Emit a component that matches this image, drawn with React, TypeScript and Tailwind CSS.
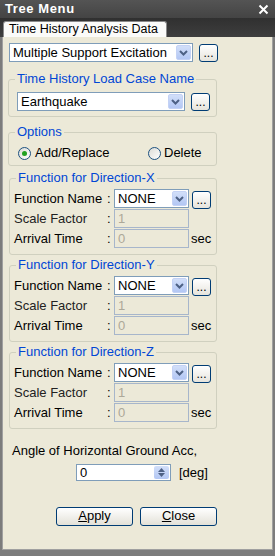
import React from "react";

const font = { fontFamily: '"Liberation Sans", Arial, sans-serif' };

function Chevron() {
  return (
    <svg width="9" height="6" viewBox="0 0 9 6">
      <path d="M1 1 L4.5 4.5 L8 1" stroke="#4d6185" strokeWidth="2" fill="none" />
    </svg>
  );
}

function Combo({ text, w }: { text: string; w: string }) {
  return (
    <div className={`${w} h-[19px] flex items-center border border-[#7f9db9] bg-white`}>
      <span className="flex-1 pl-[3px] text-[13px] leading-[14px] text-black truncate">{text}</span>
      <div className="w-[15px] h-[15px] mr-[1px] flex items-center justify-center rounded-[2px] bg-gradient-to-b from-[#d2dff9] to-[#b3c7f4] border border-[#c4d2f5]">
        <Chevron />
      </div>
    </div>
  );
}

function DotBtn() {
  return (
    <div className="w-[19px] h-[18px] flex items-end justify-center border border-[#003c74] rounded-[3px] bg-gradient-to-b from-white to-[#e6e4dc] text-[12px] leading-[12px] pb-[2px] text-black">
      ...
    </div>
  );
}

function Legend({ children }: { children: React.ReactNode }) {
  return (
    <legend className="ml-[6px] px-[2px] text-[13px] leading-[14px] text-[#0046d5]">{children}</legend>
  );
}

function Disabled({ v }: { v: string }) {
  return (
    <div className="w-[75px] h-[19px] border border-[#a7b6cb] bg-[#ece9d8] pl-[3px] flex items-center text-[13px] text-[#aca899]">
      {v}
    </div>
  );
}

function FuncGroup({ dir, mt }: { dir: string; mt: string }) {
  return (
    <fieldset className={`${mt} ml-[6px] w-[208px] h-[84px] border border-[#d0d0bf] rounded-[3px]`}>
      <Legend>Function for Direction-{dir}</Legend>
      <div className="mt-[4px] pl-[4px] flex flex-col gap-[1px] text-[13px] leading-[14px] text-black">
        <div className="flex items-center h-[19px]">
          <span className="w-[93px]">Function Name</span>
          <span className="w-[7px]">:</span>
          <Combo text="NONE" w="w-[75px]" />
          <div className="ml-[3px] mt-[2px]">
            <DotBtn />
          </div>
        </div>
        <div className="flex items-center h-[19px]">
          <span className="w-[93px] text-[#222]">Scale Factor</span>
          <span className="w-[7px]">:</span>
          <Disabled v="1" />
        </div>
        <div className="flex items-center h-[19px]">
          <span className="w-[93px]">Arrival Time</span>
          <span className="w-[7px]">:</span>
          <Disabled v="0" />
          <span className="ml-[2px]">sec</span>
        </div>
      </div>
    </fieldset>
  );
}

function Radio({ on }: { on?: boolean }) {
  return (
    <div className="w-[13px] h-[13px] rounded-full border border-[#1c5180] bg-gradient-to-br from-[#dcdcd6] to-white flex items-center justify-center">
      {on && <div className="w-[5px] h-[5px] rounded-full bg-[#21a121]" />}
    </div>
  );
}

function Btn({ label, u }: { label: string; u: string }) {
  return (
    <div className="w-[77px] h-[19px] flex items-center justify-center border border-[#003c74] rounded-[3px] bg-gradient-to-b from-white to-[#e3e1d8] text-[13px] text-black">
      <span>
        <span className="underline">{u}</span>
        {label}
      </span>
    </div>
  );
}

export default function App() {
  return (
    <div style={font} className="w-[275px] h-[556px] bg-[#7c7c7c] flex flex-col overflow-hidden">
      <div className="h-[18px] bg-gradient-to-b from-[#545454] to-[#444444] flex items-center justify-between px-[5px]">
        <span className="text-white font-bold text-[13px] tracking-[0.6px]">Tree Menu</span>
        <svg width="11" height="11" viewBox="0 0 11 11" className="mr-[1px]">
          <path d="M1.5 1.5 L9.5 9.5 M9.5 1.5 L1.5 9.5" stroke="white" strokeWidth="2" />
        </svg>
      </div>
      <div className="h-[19px] bg-gradient-to-b from-[#303030] to-[#3e3e3e] flex items-end pl-[3px]">
        <div className="w-[164px] h-[16px] bg-[#fbfbf9] border border-[#8a8a8a] border-b-0 rounded-t-[3px] flex items-center pl-[5px] text-[12.5px] text-black">
          Time History Analysis Data
        </div>
      </div>
      <div className="mx-[2px] h-[513px] bg-[#ece9d8] border border-t-0 border-[#a0a0a0] flex flex-col">
        <div className="mt-[6px] ml-[6px] flex items-center">
          <Combo text="Multiple Support Excitation" w="w-[184px]" />
          <div className="ml-[6px] mt-[1px]">
            <DotBtn />
          </div>
        </div>

        <fieldset className="mt-[10px] ml-[5px] w-[209px] h-[45px] border border-[#d0d0bf] rounded-[3px]">
          <Legend>Time History Load Case Name</Legend>
          <div className="mt-[6px] pl-[8px] flex items-center">
            <Combo text="Earthquake" w="w-[168px]" />
            <div className="ml-[6px] mt-[1px]">
              <DotBtn />
            </div>
          </div>
        </fieldset>

        <fieldset className="mt-[8px] ml-[5px] w-[209px] h-[41px] border border-[#d0d0bf] rounded-[3px]">
          <Legend>Options</Legend>
          <div className="mt-[7px] pl-[9px] flex items-center text-[13px] leading-[14px] text-black">
            <Radio on />
            <span className="ml-[4px] w-[113px]">Add/Replace</span>
            <Radio />
            <span className="ml-[3px]">Delete</span>
          </div>
        </fieldset>

        <FuncGroup dir="X" mt="mt-[5px]" />
        <FuncGroup dir="Y" mt="mt-[3px]" />
        <FuncGroup dir="Z" mt="mt-[3px]" />

        <div className="mt-[16px] ml-[9px] text-[13px] leading-[12px] text-black">
          Angle of Horizontal Ground Acc,
        </div>
        <div className="mt-[6px] ml-[73px] flex items-center">
          <div className="w-[95px] h-[17px] border border-[#7f9db9] bg-white flex items-center">
            <span className="flex-1 pl-[3px] text-[13px] text-black">0</span>
            <div className="w-[15px] h-[13px] mr-[1px] rounded-[2px] bg-gradient-to-b from-[#d2dff9] to-[#b3c7f4] flex flex-col items-center justify-center gap-[1px]">
              <svg width="7" height="4" viewBox="0 0 7 4"><path d="M0 4 L3.5 0 L7 4 Z" fill="#4d6185" /></svg>
              <svg width="7" height="4" viewBox="0 0 7 4"><path d="M0 0 L3.5 4 L7 0 Z" fill="#4d6185" /></svg>
            </div>
          </div>
          <span className="ml-[8px] text-[13px] text-black">[deg]</span>
        </div>
        <div className="mt-[24px] ml-[53px] flex gap-[7px]">
          <Btn u="A" label="pply" />
          <Btn u="C" label="lose" />
        </div>
      </div>
    </div>
  );
}
